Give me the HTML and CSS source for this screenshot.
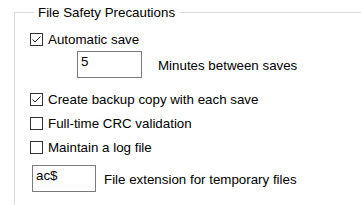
FILE: index.html
```html
<!DOCTYPE html>
<html>
<head>
    <title>File Safety Precautions</title>
    <meta name="viewport" content="width=device-width, initial-scale=1.0">
    <link rel="stylesheet" href="styles.css">
</head>
<body>
    <fieldset class="group">
        <legend class="group-title">File Safety Precautions</legend>

        <div class="row">
            <span class="check checked">
                <svg viewBox="0 0 13 13" width="13" height="13"><path d="M2.5 6.5 L5 9 L10.5 3.5" fill="none" stroke="#222" stroke-width="1"/></svg>
            </span>
            <span class="label">Automatic save</span>
        </div>

        <div class="field-row minutes">
            <div class="field wide">5</div>
            <span class="label">Minutes between saves</span>
        </div>

        <div class="row">
            <span class="check checked">
                <svg viewBox="0 0 13 13" width="13" height="13"><path d="M2.5 6.5 L5 9 L10.5 3.5" fill="none" stroke="#222" stroke-width="1"/></svg>
            </span>
            <span class="label">Create backup copy with each save</span>
        </div>

        <div class="row">
            <span class="check"></span>
            <span class="label">Full-time CRC validation</span>
        </div>

        <div class="row">
            <span class="check"></span>
            <span class="label">Maintain a log file</span>
        </div>

        <div class="field-row extension">
            <div class="field">ac$</div>
            <span class="label">File extension for temporary files</span>
        </div>
    </fieldset>
</body>
</html>
```

FILE: styles.css
```css
html, body {
    margin: 0;
    background: #ffffff;
    overflow: hidden;
}
body {
    font-family: "Liberation Sans", Arial, sans-serif;
    font-size: 13.33px;
    color: #000000;
    width: 361px;
    height: 205px;
}
/* group box runs off the right and bottom edges, so only top + left lines show */
.group {
    margin: 4px 0 0 14px;
    padding: 6px 0 0 15px;
    width: 347px;
    height: 201px;
    border: 1px solid #dcdcdc;
    border-right: none;
    border-bottom: none;
    box-sizing: border-box;
}
.group-title {
    margin-left: 4px;
    padding: 0 4px;
    line-height: 17px;
}
.row {
    display: flex;
    align-items: center;
    height: 24px;
}
.check {
    width: 13px;
    height: 13px;
    border: 1px solid #333333;
    box-sizing: border-box;
    background: #ffffff;
    margin-right: 5px;
    display: flex;
}
.check svg {
    margin: -1px;
}
.label {
    line-height: 15px;
}
.field-row {
    display: flex;
    align-items: center;
}
.field-row .label {
    padding-top: 2px;
}
.minutes {
    margin: 0 0 9px 47px;
}
.minutes .field {
    margin-right: 16px;
}
.extension {
    margin: 6px 0 0 2px;
}
.extension .field {
    margin-right: 8px;
}
.field {
    width: 64px;
    height: 27px;
    box-sizing: border-box;
    border: 1px solid #7a7a7a;
    padding: 2px 3px;
    line-height: 15px;
    background: #ffffff;
}
.field.wide {
    width: 65px;
}
```
